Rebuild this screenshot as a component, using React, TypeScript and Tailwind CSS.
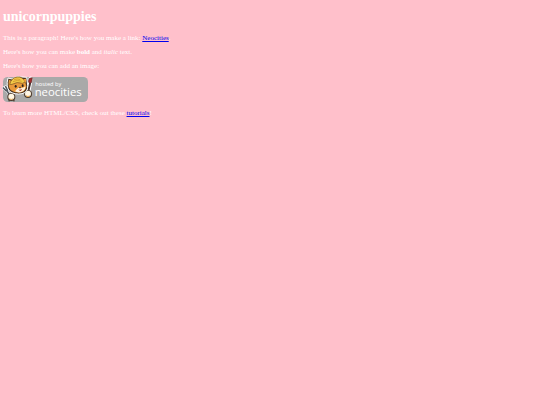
function CatBadge() {
  return (
    <svg
      width="85"
      height="25"
      viewBox="0 0 255 75"
      className="my-px block overflow-visible"
      role="img"
      aria-label="Hosted by Neocities"
    >
      <rect width="255" height="75" rx="14" fill="#a9a9a9" />
      {/* fork and left paw */}
      <path d="M1 33 L9 41 M8 29 L14 39 M5 31 L12 40 M9 41 Q14 42 14 37 M11 40 L22 57" fill="none" stroke="#fff" strokeWidth="8" strokeLinecap="round" />
      <path d="M1 33 L9 41 M8 29 L14 39 M11 40 L22 57" fill="none" stroke="#555b62" strokeWidth="5" strokeLinecap="round" />
      <path d="M19 66 L18 73 M30 66 L34 73" stroke="#5b493d" strokeWidth="4" />
      <circle cx="25" cy="60" r="12" fill="#4c3a2b" />
      <circle cx="25" cy="59" r="9" fill="#fff6e4" />
      <path d="M19 63 Q25 69 31 63 L29 67 Q24 70 20 66 Z" fill="#eda544" />
      {/* paint brush and right paw */}
      <path d="M83 5 L74 52" stroke="#fff" strokeWidth="13" strokeLinecap="round" />
      <path d="M82 16 L75 46" stroke="#453230" strokeWidth="6" />
      <path d="M79 4 L88 2 L86 16 L80 19 L76 14 Z" fill="#a62c2c" stroke="#54282b" strokeWidth="2" />
      <circle cx="75" cy="51" r="12" fill="#4c3a2b" />
      <circle cx="75" cy="50" r="9" fill="#fff6e4" />
      <path d="M69 54 Q75 60 81 54 L78 59 Q74 61 70 58 Z" fill="#eda544" />
      {/* head */}
      <path d="M15 3 L27 6 Q43 -6 57 0 L71 1 L74 25 Q76 45 57 50 Q35 54 20 43 Q8 30 15 3 Z" fill="#4b3422" stroke="#fff" strokeWidth="3" />
      <path d="M18 8 L31 14 L65 8 L70 28 Q69 42 55 46 Q36 49 23 39 Q14 29 18 8 Z" fill="#e99a3b" />
      <path d="M46 33 Q50 28 56 33 Q64 31 67 28 Q68 41 55 45 Q45 48 36 43 Q40 37 46 33 Z" fill="#fff1dc" />
      <path d="M20 23 Q24 3 42 0 Q58 -2 67 15 L58 19 Q42 13 27 22 Z" fill="#f3c947" stroke="#79501f" strokeWidth="2" />
      <path d="M30 14 Q43 7 56 13 M33 8 Q43 4 52 8" fill="none" stroke="#c68d27" strokeWidth="2" />
      <path d="M61 7 L69 5 L69 19 Z" fill="#ed9c39" />
      <ellipse cx="38" cy="28" rx="3" ry="4" fill="#2c211c" />
      <ellipse cx="59" cy="26" rx="3" ry="4" fill="#2c211c" />
      <path d="M47 30 L55 29 L51 35 Z" fill="#573022" />
      <path d="M46 37 Q51 40 57 35 L54 42 Q49 43 46 37" fill="#b54231" />
      <text x="97" y="27" fill="#fff" fontSize="17" className="font-['Open_Sans','Noto_Sans',sans-serif]">
        hosted by
      </text>
      <text x="95" y="58" fill="#fff" fontSize="34" className="font-['Open_Sans','Noto_Sans',sans-serif]">
        neocities
      </text>
    </svg>
  );
}

export default function App() {
  return (
    <main className="min-h-screen bg-[#ffc0cb] px-[3px] pt-[9px] font-['Liberation_Serif',serif] text-[7px] leading-[8px] text-white">
      <h1 className="mb-[9px] text-[14px] leading-4 font-bold">unicornpuppies</h1>
      <div className="flex flex-col gap-[6px]">
        <p>
          This is a paragraph! Here's how you make a link:{" "}
          <a href="https://neocities.org" className="text-[#0000ee] underline">Neocities</a>.
        </p>
        <p>
          Here's how you can make <strong>bold</strong> and <em>italic</em> text.
        </p>
        <p>Here's how you can add an image:</p>
        <CatBadge />
        <p>
          To learn more HTML/CSS, check out these{" "}
          <a href="https://neocities.org/tutorials" className="text-[#0000ee] underline">tutorials</a>!
        </p>
      </div>
    </main>
  );
}
